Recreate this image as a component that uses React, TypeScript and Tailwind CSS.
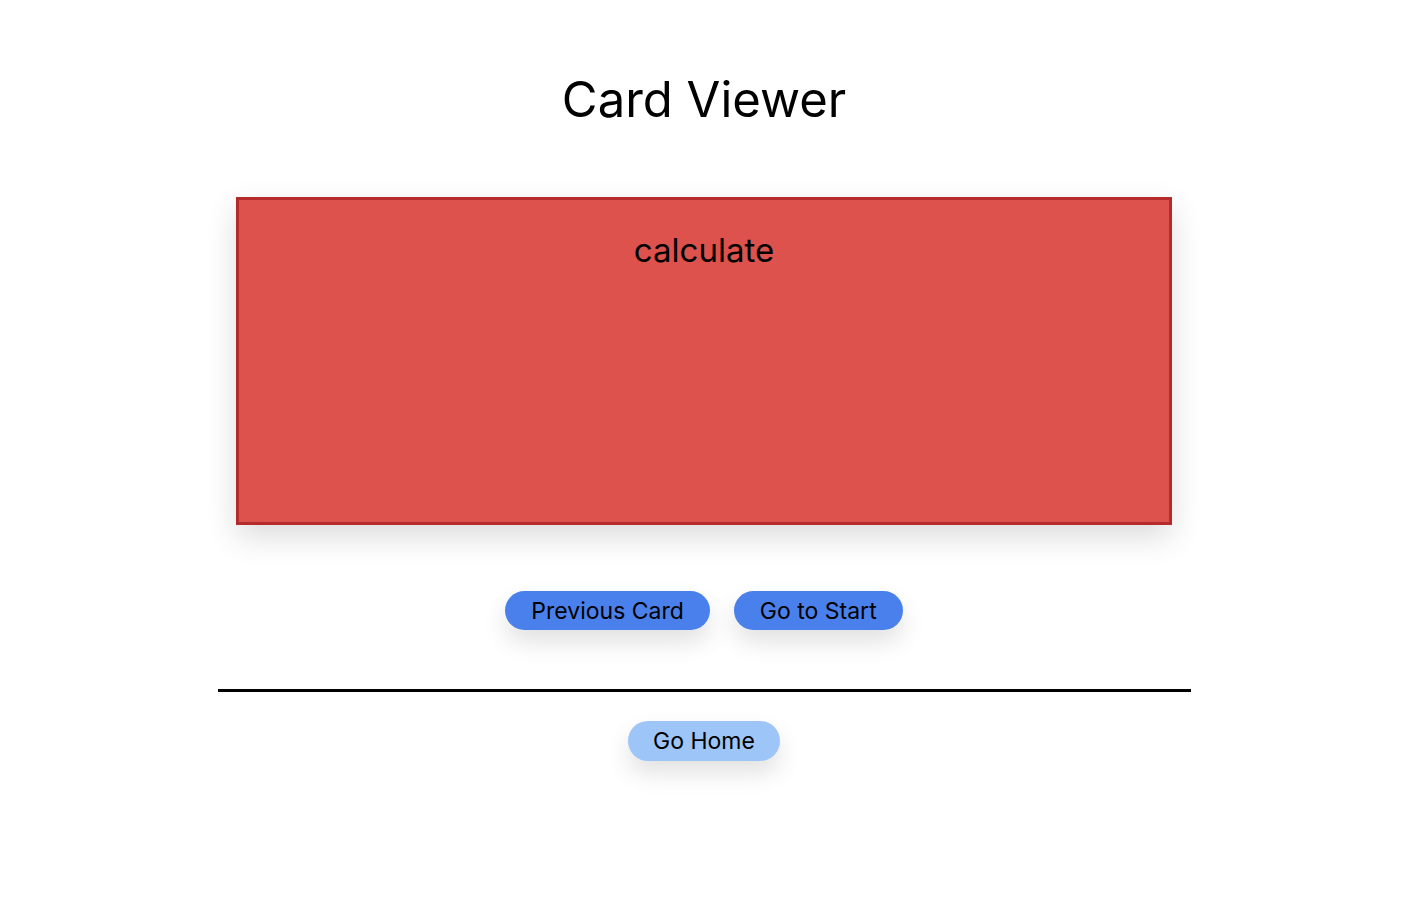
export default function App() {
  return (
    <div className="min-h-[902px] bg-white font-['Inter',sans-serif] text-black">
      <div className="flex flex-col items-center pt-[70px]">
        <h1 className="text-[49px] font-normal leading-[59px]">Card Viewer</h1>

        <div className="mt-[68px] h-[328px] w-[936px] border-[3px] border-[#b52b2b] bg-[#dd524c] pt-[30px] text-center shadow-[0_12px_30px_rgba(0,0,0,0.14)]">
          <p className="text-[33px] leading-[41px]">calculate</p>
        </div>

        <div className="mt-[66px] flex gap-[24px]">
          <button className="h-[39px] rounded-full bg-[#4a80ec] px-[26px] text-[23px] leading-[28px] shadow-[0_12px_24px_rgba(0,0,0,0.12)]">
            Previous Card
          </button>
          <button className="h-[39px] rounded-full bg-[#4a80ec] px-[26px] text-[23px] leading-[28px] shadow-[0_12px_24px_rgba(0,0,0,0.12)]">
            Go to Start
          </button>
        </div>

        <hr className="mt-[59px] h-[3px] w-[973px] border-0 bg-black" />

        <button className="mt-[29px] h-[40px] rounded-full bg-[#9ec5f8] px-[25px] text-[23px] leading-[28px] shadow-[0_12px_24px_rgba(0,0,0,0.12)]">
          Go Home
        </button>
      </div>
    </div>
  );
}
